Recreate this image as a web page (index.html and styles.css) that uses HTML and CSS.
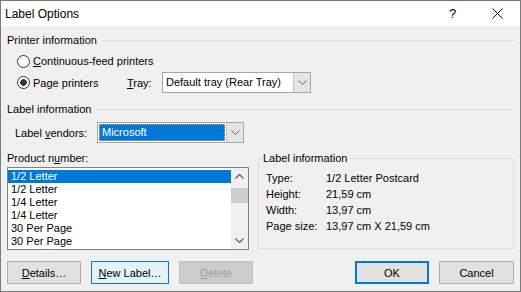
FILE: index.html
```html
<!DOCTYPE html>
<html lang="en">
<head>
  <meta charset="UTF-8">
  <title>Label Options</title>
  <link rel="stylesheet" href="styles.css">
</head>
<body>

  <div class="window">
    <div class="titlebar">
      <span class="title">Label Options</span>
      <span class="caption-btn help">?</span>
      <span class="caption-btn close">
        <svg width="11" height="11" viewBox="0 0 11 11"><path d="M0.5 0.5L10.5 10.5M10.5 0.5L0.5 10.5" stroke="#000" stroke-width="1"/></svg>
      </span>
    </div>

    <div class="content">
      <div class="section-head"><span>Printer information</span><span class="rule"></span></div>

      <div class="radio-row row-first">
        <span class="radio"></span>
        <span><u>C</u>ontinuous-feed printers</span>
      </div>

      <div class="radio-row row-second">
        <span class="radio checked"></span>
        <span class="page-label">Pa<u>g</u>e printers</span>
        <span class="tray-label"><u>T</u>ray:</span>
        <div class="combo tray">
          <span class="field">Default tray (Rear Tray)</span>
          <span class="drop">
            <svg width="9" height="5" viewBox="0 0 9 5"><path d="M0.5 0.5L4.5 4.5L8.5 0.5" fill="none" stroke="#606060"/></svg>
          </span>
        </div>
      </div>

      <div class="section-head head-label"><span>Label information</span><span class="rule"></span></div>

      <div class="vendor-row">
        <span class="vendor-label">Label <u>v</u>endors:</span>
        <div class="combo vendor">
          <span class="field selected">Microsoft</span>
          <span class="drop">
            <svg width="9" height="5" viewBox="0 0 9 5"><path d="M0.5 0.5L4.5 4.5L8.5 0.5" fill="none" stroke="#606060"/></svg>
          </span>
        </div>
      </div>

      <div class="bottom">
        <div class="product">
          <div class="product-label">Product n<u>u</u>mber:</div>
          <div class="listbox">
            <div class="items">
              <div class="item selected">1/2 Letter</div>
              <div class="item">1/2 Letter</div>
              <div class="item">1/4 Letter</div>
              <div class="item">1/4 Letter</div>
              <div class="item">30 Per Page</div>
              <div class="item">30 Per Page</div>
            </div>
            <div class="scrollbar">
              <span class="arrow">
                <svg width="9" height="5" viewBox="0 0 9 5"><path d="M0.5 4.5L4.5 0.5L8.5 4.5" fill="none" stroke="#606060" stroke-width="1.3"/></svg>
              </span>
              <span class="track"><span class="thumb"></span></span>
              <span class="arrow">
                <svg width="9" height="5" viewBox="0 0 9 5"><path d="M0.5 0.5L4.5 4.5L8.5 0.5" fill="none" stroke="#606060" stroke-width="1.3"/></svg>
              </span>
            </div>
          </div>
        </div>

        <fieldset class="info">
          <legend>Label information</legend>
          <div class="info-grid">
            <span>Type:</span><span>1/2 Letter Postcard</span>
            <span>Height:</span><span>21,59 cm</span>
            <span>Width:</span><span>13,97 cm</span>
            <span>Page size:</span><span>13,97 cm X 21,59 cm</span>
          </div>
        </fieldset>
      </div>

      <div class="buttons">
        <button class="btn btn-details"><u>D</u>etails…</button>
        <button class="btn btn-new hover"><u>N</u>ew Label…</button>
        <button class="btn btn-delete" disabled><u>D</u>elete</button>
        <span class="spacer"></span>
        <button class="btn btn-ok default">OK</button>
        <button class="btn btn-cancel">Cancel</button>
      </div>
    </div>
  </div>

</body>
</html>
```

FILE: styles.css
```css
* {
  box-sizing: border-box;
}

body {
  margin: 0;
  font-family: "Liberation Sans", Arial, sans-serif;
  font-size: 11px;
  color: #000;
}

u {
  text-underline-offset: 1px;
}

.window {
  width: 521px;
  height: 292px;
  border: 1px solid #7a7a7a;
  background-color: #f0f0f0;
  display: flex;
  flex-direction: column;
}

.titlebar {
  height: 25px;
  background-color: #fff;
  display: flex;
  align-items: center;
  padding-left: 4px;
}

.title {
  flex: 1;
  font-size: 12px;
}

.caption-btn {
  width: 46px;
  height: 25px;
  display: flex;
  align-items: center;
  justify-content: center;
}

.help {
  font-size: 13px;
  padding-left: 3px;
}

.close svg {
  display: block;
}

.content {
  flex: 1;
  padding: 7px 6px 7px 6px;
  display: flex;
  flex-direction: column;
}

.section-head {
  height: 14px;
  line-height: 14px;
  display: flex;
  align-items: center;
}

.rule {
  flex: 1;
  height: 1px;
  background-color: #dcdcdc;
  margin-left: 5px;
}

.head-label {
  margin-top: 9px;
}

.radio-row {
  display: flex;
  align-items: center;
  margin-left: 10px;
}

.row-first {
  height: 14px;
  margin-top: 7px;
}

.row-second {
  height: 21px;
  margin-top: 4px;
}

.radio {
  width: 13px;
  height: 13px;
  border: 1px solid #333;
  border-radius: 50%;
  background-color: #fff;
  margin-right: 3px;
}

.radio.checked {
  background: radial-gradient(circle, #333 0, #333 3px, #fff 3.6px);
}

.page-label {
  width: 94px;
}

.tray-label {
  width: 35px;
}

.combo {
  height: 21px;
  display: flex;
  border: 1px solid #a6a6a6;
  background-color: #fff;
}

.combo .field {
  flex: 1;
  line-height: 19px;
  padding-left: 3px;
  white-space: nowrap;
}

.combo .drop {
  width: 17px;
  background-color: #e5e5e5;
  border-left: 1px solid #c4c4c4;
  display: flex;
  align-items: center;
  justify-content: center;
}

.combo.tray {
  width: 149px;
}

.vendor-row {
  height: 21px;
  margin-top: 6px;
  margin-left: 8px;
  display: flex;
  align-items: center;
}

.vendor-label {
  width: 82px;
}

.combo.vendor {
  width: 147px;
  padding: 1px 0 1px 1px;
}

.combo.vendor .field {
  line-height: 15px;
  padding-left: 2px;
}

.field.selected {
  background-color: #0078d7;
  color: #fff;
  border: 1px dotted #f0a040;
  margin-right: 1px;
}

.combo.vendor .drop {
  margin: -1px 0;
}

.bottom {
  margin-top: 8px;
  display: flex;
  gap: 9px;
}

.product {
  width: 242px;
}

.product-label {
  height: 14px;
  line-height: 14px;
}

.listbox {
  margin-top: 2px;
  height: 83px;
  border: 1px solid #828282;
  background-color: #fff;
  display: flex;
}

.items {
  flex: 1;
  padding-top: 2px;
}

.item {
  height: 13px;
  line-height: 13px;
  padding-left: 3px;
}

.item.selected {
  background-color: #0078d7;
  color: #fff;
}

.scrollbar {
  width: 17px;
  background-color: #f0f0f0;
  display: flex;
  flex-direction: column;
}

.scrollbar .arrow {
  height: 17px;
  display: flex;
  align-items: center;
  justify-content: center;
}

.track {
  flex: 1;
}

.thumb {
  display: block;
  height: 15px;
  margin-top: 3px;
  background-color: #cdcdcd;
}

.info {
  width: 256px;
  height: 98px;
  margin: 0;
  padding: 0 0 0 7px;
  border: 1px solid #dcdcdc;
  min-width: 0;
}

.info legend {
  padding: 0 1px;
  margin-left: -4px;
  line-height: 14px;
}

.info-grid {
  margin-top: 5px;
  display: grid;
  grid-template-columns: 60px 1fr;
  line-height: 16px;
}

.buttons {
  margin-top: 11px;
  height: 23px;
  display: flex;
  gap: 10px;
}

.spacer {
  flex: 1;
}

.btn {
  height: 23px;
  width: 74px;
  padding: 0;
  font-family: inherit;
  font-size: 11px;
  color: #000;
  background-color: #e1e1e1;
  border: 1px solid #adadad;
}

.btn-new {
  width: 78px;
}

.btn-cancel {
  width: 75px;
}

.btn.hover {
  background-color: #e5f1fb;
  border-color: #0078d7;
}

.btn.default {
  border: 2px solid #0078d7;
}

.btn:disabled {
  background-color: #cccccc;
  border-color: #bfbfbf;
  color: #9d9d9d;
}
```
